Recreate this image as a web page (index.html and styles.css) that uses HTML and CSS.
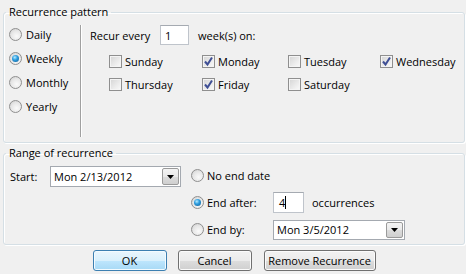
FILE: index.html
```html
<!DOCTYPE html>
<html>
    <head>
        <meta charset="utf-8">
        <title>Appointment Recurrence</title>
        <link rel="stylesheet" href="styles.css">
    </head>
    <body>
        <fieldset class="group">
            <legend>Recurrence pattern</legend>
            <div class="pattern">
                <div class="kinds">
                    <div class="opt"><span class="radio"></span>Daily</div>
                    <div class="opt"><span class="radio on"></span>Weekly</div>
                    <div class="opt"><span class="radio"></span>Monthly</div>
                    <div class="opt"><span class="radio"></span>Yearly</div>
                </div>
                <div class="weekly">
                    <div class="every">
                        <span class="every-label">Recur every</span>
                        <span class="field every-box">1</span>
                        <span class="every-unit">week(s) on:</span>
                    </div>
                    <div class="days">
                        <div class="opt"><span class="check"></span>Sunday</div>
                        <div class="opt"><span class="check on"><svg viewBox="0 0 11 11"><path d="M2 5.5 L4.5 8.5 L9 1.5" /></svg></span>Monday</div>
                        <div class="opt"><span class="check"></span>Tuesday</div>
                        <div class="opt"><span class="check on"><svg viewBox="0 0 11 11"><path d="M2 5.5 L4.5 8.5 L9 1.5" /></svg></span>Wednesday</div>
                        <div class="opt"><span class="check"></span>Thursday</div>
                        <div class="opt"><span class="check on"><svg viewBox="0 0 11 11"><path d="M2 5.5 L4.5 8.5 L9 1.5" /></svg></span>Friday</div>
                        <div class="opt"><span class="check"></span>Saturday</div>
                    </div>
                </div>
            </div>
        </fieldset>

        <fieldset class="group range-group">
            <legend>Range of recurrence</legend>
            <div class="range">
                <div class="start">
                    <span class="start-label">Start:</span>
                    <div class="combo start-combo">
                        <span class="combo-text">Mon 2/13/2012</span>
                        <span class="drop"><svg viewBox="0 0 7 4"><path d="M0 0 H7 L3.5 4 Z" /></svg></span>
                    </div>
                </div>
                <div class="ends">
                    <div class="opt end-row"><span class="radio"></span>No end date</div>
                    <div class="opt end-row">
                        <span class="radio on"></span><span class="end-label">End after:</span>
                        <span class="field count-box">4<span class="caret"></span></span>
                        <span class="count-unit">occurrences</span>
                    </div>
                    <div class="opt end-row">
                        <span class="radio"></span><span class="end-label">End by:</span>
                        <div class="combo end-combo">
                            <span class="combo-text">Mon 3/5/2012</span>
                            <span class="drop"><svg viewBox="0 0 7 4"><path d="M0 0 H7 L3.5 4 Z" /></svg></span>
                        </div>
                    </div>
                </div>
            </div>
        </fieldset>

        <div class="buttons">
            <button type="button" class="btn default">OK</button>
            <button type="button" class="btn">Cancel</button>
            <button type="button" class="btn wide">Remove Recurrence</button>
        </div>
    </body>
</html>
```

FILE: styles.css
```css
html, body {
    height: 100%;
}

body {
    margin: 0;
    padding: 4px 1px 0 3px;
    box-sizing: border-box;
    overflow: hidden;
    background-color: #f0f0f0;
    color: #000;
    font-family: "Open Sans", sans-serif;
    font-size: 11px;
}

.group {
    margin: 0;
    padding: 0;
    border: 1px solid #d5dfe5;
    border-radius: 3px;
    box-shadow: inset 1px 1px 0 #fff, 1px 1px 0 #fff;
}

legend {
    margin-left: 2px;
    padding: 0 3px;
    line-height: 16px;
}

.opt {
    display: flex;
    align-items: center;
    height: 16px;
    white-space: nowrap;
}

.radio {
    flex: none;
    position: relative;
    width: 11px;
    height: 11px;
    margin-right: 4px;
    border: 1px solid #8f8f8f;
    border-radius: 50%;
    background: radial-gradient(circle at 60% 65%, #fafafa 0%, #e6e6e6 55%, #c9c9c9 100%);
}

.radio.on::after {
    content: "";
    position: absolute;
    left: 2px;
    top: 2px;
    width: 7px;
    height: 7px;
    border-radius: 50%;
    background: radial-gradient(circle at 40% 35%, #b7ecff 0%, #2f9ee0 40%, #0d5a92 100%);
}

.check {
    flex: none;
    width: 11px;
    height: 11px;
    margin-right: 3px;
    border: 1px solid #8f8f8f;
    background: linear-gradient(135deg, #d4d4d4 0%, #ececec 60%, #fafafa 100%);
    box-shadow: inset 0 0 0 1px #f4f4f4;
}

.check svg {
    display: block;
    width: 11px;
    height: 11px;
}

.check svg path {
    fill: none;
    stroke: #3f4f95;
    stroke-width: 2;
}

.field {
    box-sizing: border-box;
    display: flex;
    align-items: center;
    padding-left: 4px;
    background: #fff;
    border: 1px solid #bfc4cb;
    border-top-color: #a5aab1;
}

/* recurrence pattern */

.pattern {
    display: flex;
    height: 122px;
}

.kinds {
    width: 76px;
    margin: 5px 0 5px;
    padding-top: 1px;
    border-right: 1px solid #a0a0a0;
    box-shadow: 1px 0 0 #fff;
    display: grid;
    grid-auto-rows: 16px;
    row-gap: 8px;
    align-content: start;
}

.kinds .radio {
    margin-left: 5px;
}

.weekly {
    flex: 1;
    padding: 5px 0 0 9px;
}

.every {
    display: flex;
    align-items: center;
    height: 20px;
}

.every-label {
    width: 70px;
}

.every-box {
    width: 29px;
    height: 20px;
}

.every-unit {
    margin-left: 9px;
}

.days {
    display: grid;
    grid-template-columns: 93px 86px 92px auto;
    grid-auto-rows: 16px;
    row-gap: 7px;
    margin-top: 8px;
    padding-left: 19px;
}

/* range of recurrence */

.range-group {
    margin-top: 2px;
}

.range {
    display: flex;
    height: 83px;
}

.start {
    display: flex;
    align-items: center;
    align-self: flex-start;
    margin-top: 5px;
    padding-left: 6px;
}

.start-label {
    width: 40px;
}

.combo {
    box-sizing: border-box;
    display: flex;
    align-items: center;
    background: #fff;
    border: 1px solid #a4a9b0;
}

.combo-text {
    flex: 1;
    padding-left: 3px;
}

.drop {
    box-sizing: border-box;
    display: flex;
    align-items: center;
    justify-content: center;
    width: 17px;
    align-self: stretch;
    margin: 1px;
    border: 1px solid #9a9a9a;
    border-radius: 2px;
    background: linear-gradient(#f4f4f4 0%, #e9e9e9 50%, #dcdcdc 51%, #cfcfcf 100%);
}

.drop svg {
    width: 7px;
    height: 4px;
    fill: #000;
}

.start-combo {
    width: 131px;
    height: 21px;
}

.ends {
    display: grid;
    grid-auto-rows: 21px;
    row-gap: 6px;
    align-content: start;
    margin-left: 10px;
    padding-top: 4px;
}

.end-row {
    height: 21px;
}

.ends .radio {
    margin-right: 3px;
}

.end-label {
    width: 66px;
}

.count-box {
    width: 31px;
    height: 21px;
    padding-left: 5px;
}

.caret {
    width: 1px;
    height: 13px;
    background: #000;
}

.count-unit {
    margin-left: 8px;
}

.end-combo {
    width: 132px;
    height: 20px;
}

/* buttons */

.buttons {
    display: flex;
    justify-content: center;
    gap: 11px;
    margin-top: 5px;
}

.btn {
    width: 74px;
    height: 21px;
    padding: 0;
    font-family: inherit;
    font-size: inherit;
    color: #000;
    border: 1px solid #707070;
    border-radius: 3px;
    background: linear-gradient(#f2f2f2 0%, #ebebeb 50%, #dddddd 51%, #cfcfcf 100%);
    box-shadow: inset 0 0 0 1px #fbfbfb;
}

.btn.default {
    border-color: #3c7fb1;
    background: linear-gradient(#eaf6fd 0%, #d9f0fc 50%, #bee6fd 51%, #a7d9f5 100%);
    box-shadow: inset 0 0 0 1px #f3fbff;
}

.btn.wide {
    width: 112px;
    margin-left: 1px;
}
```
